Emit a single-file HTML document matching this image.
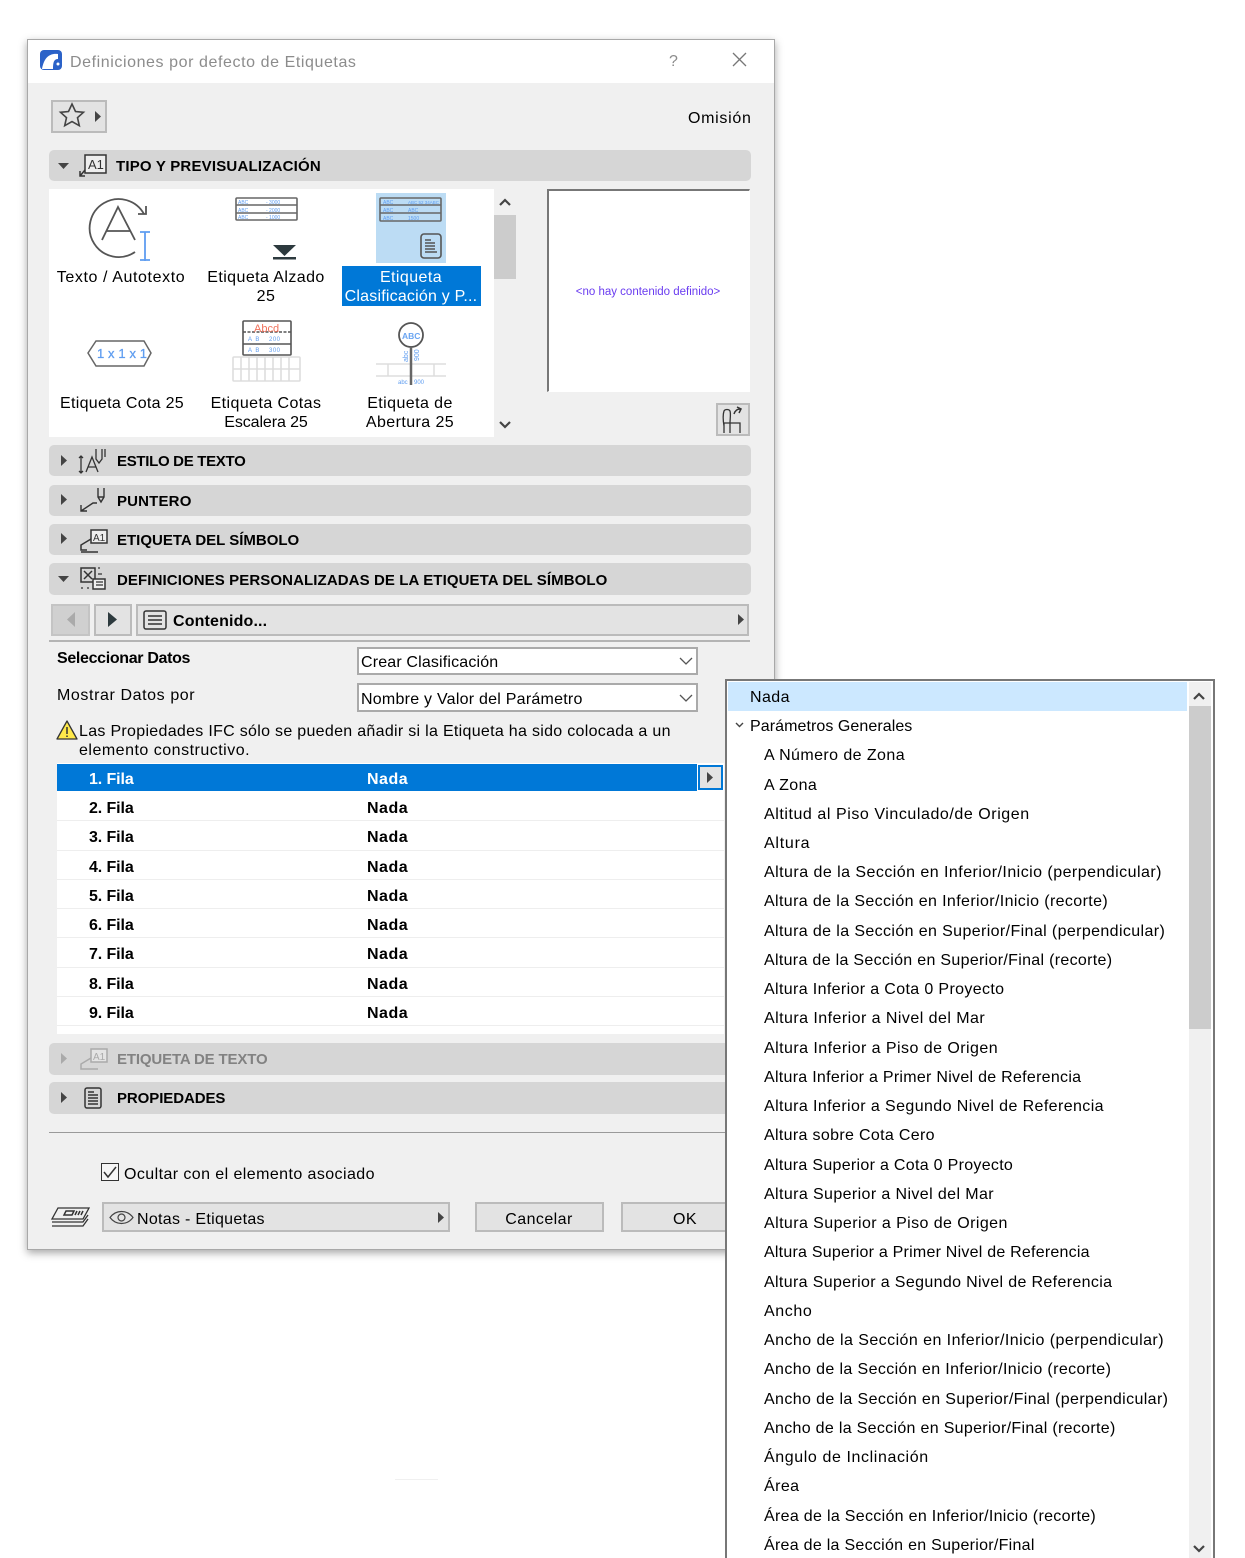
<!DOCTYPE html>
<html lang="es"><head><meta charset="utf-8"><title>Definiciones por defecto de Etiquetas</title>
<style>
html,body{margin:0;padding:0;background:#fff}
#p{position:relative;width:1245px;height:1558px;overflow:hidden;background:#fff;font-family:"Liberation Sans",sans-serif;font-size:16px;color:#000;letter-spacing:.42px}
#p div{position:absolute;box-sizing:border-box}
.t{white-space:nowrap;line-height:20px;height:20px;margin-top:2px}
.c{text-align:center;transform:translateX(-50%);margin-top:1px}
.b{font-weight:bold;letter-spacing:-.1px}
.h{font-size:15px}
.bar{left:49px;width:702px;background:#d6d6d6;border-radius:5px}
.btn{background:#e3e3e3;border:2px solid #bbb}
.dd{left:357px;width:341px;background:#fff;border:2px solid #aaa}
.sep{left:57px;width:667px;height:1px;background:#eee}
svg{position:absolute;left:0;top:0;letter-spacing:0}
</style></head><body><div id="p">
<div style="left:27px;top:39px;width:748px;height:1211px;background:#f0f0f0;border:1px solid #a8a8a8;box-shadow:0 3px 8px rgba(0,0,0,.35)"></div>
<div style="left:28px;top:40px;width:746px;height:43px;background:#fff"></div>
<div class="t" style="left:70px;top:51px;color:#8c8c8c;letter-spacing:.58px">Definiciones por defecto de Etiquetas</div>
<div class="t" style="left:669px;top:50px;color:#8c8c8c">?</div>
<div class="t" style="left:688px;top:107px;letter-spacing:.7px">Omisión</div>
<div class="btn" style="left:51px;top:100px;width:56px;height:33px"></div>
<div class="bar" style="top:150px;height:31px"></div>
<div class="t b h" style="left:116px;top:155px;letter-spacing:.2px">TIPO Y PREVISUALIZACIÓN</div>
<div style="left:49px;top:189px;width:445px;height:248px;background:#fff"></div>
<div style="left:376px;top:193px;width:70px;height:70px;background:#bcdcf4"></div>
<div style="left:342px;top:266px;width:139px;height:40px;background:#0078d7"></div>
<div style="left:494px;top:215px;width:22px;height:64px;background:#ccc"></div>
<div class="t c" style="left:121px;top:267px;letter-spacing:.6px">Texto / Autotexto</div>
<div class="t c" style="left:266px;top:267px">Etiqueta Alzado</div>
<div class="t c" style="left:266px;top:286px">25</div>
<div class="t c" style="left:411px;top:267px;color:#fff">Etiqueta</div>
<div class="t c" style="left:411px;top:286px;color:#fff;letter-spacing:.2px">Clasificación y P...</div>
<div class="t c" style="left:122px;top:393px;letter-spacing:.3px">Etiqueta Cota 25</div>
<div class="t c" style="left:266px;top:393px">Etiqueta Cotas</div>
<div class="t c" style="left:266px;top:412px;letter-spacing:-.1px">Escalera 25</div>
<div class="t c" style="left:410px;top:393px">Etiqueta de</div>
<div class="t c" style="left:410px;top:412px">Abertura 25</div>
<div style="left:547px;top:189px;width:203px;height:203px;background:#fff;border:1px solid #fff;border-top:2px solid #777;border-left:2px solid #777"></div>
<div class="t c" style="left:648px;top:281px;color:#6a3cf0;font-size:11.5px;letter-spacing:0">&lt;no hay contenido definido&gt;</div>
<div class="btn" style="left:716px;top:403px;width:34px;height:33px"></div>
<div class="bar" style="top:445px;height:31px"></div><div class="t b h" style="left:117px;top:450px;letter-spacing:-.31px">ESTILO DE TEXTO</div>
<div class="bar" style="top:485px;height:31px"></div><div class="t b h" style="left:117px;top:490px;letter-spacing:.17px">PUNTERO</div>
<div class="bar" style="top:524px;height:31px"></div><div class="t b h" style="left:117px;top:529px;letter-spacing:0">ETIQUETA DEL SÍMBOLO</div>
<div class="bar" style="top:563px;height:32px"></div><div class="t b h" style="left:117px;top:569px;letter-spacing:.1px">DEFINICIONES PERSONALIZADAS DE LA ETIQUETA DEL SÍMBOLO</div>
<div class="btn" style="left:51px;top:604px;width:39px;height:32px;background:#d0d0d0;border-color:#c4c4c4"></div>
<div class="btn" style="left:94px;top:604px;width:38px;height:32px"></div>
<div class="btn" style="left:136px;top:604px;width:613px;height:32px"></div>
<div class="t b" style="left:173px;top:610px;letter-spacing:.15px">Contenido...</div>
<div style="left:49px;top:640px;width:701px;height:2px;background:#b4b4b4"></div>
<div class="t b" style="left:57px;top:647px;letter-spacing:-.33px">Seleccionar Datos</div>
<div class="t" style="left:57px;top:684px;letter-spacing:.6px">Mostrar Datos por</div>
<div class="dd" style="top:647px;height:28px"></div><div class="t" style="left:361px;top:651px;letter-spacing:.16px">Crear Clasificación</div>
<div class="dd" style="top:683px;height:29px"></div><div class="t" style="left:361px;top:688px;letter-spacing:.24px">Nombre y Valor del Parámetro</div>
<div class="t" style="left:79px;top:720px;letter-spacing:.3px">Las Propiedades IFC sólo se pueden añadir si la Etiqueta ha sido colocada a un</div>
<div class="t" style="left:79px;top:739px;letter-spacing:.5px">elemento constructivo.</div>
<div style="left:57px;top:763px;width:667px;height:271px;background:#fff"></div>
<div style="left:57px;top:764px;width:640px;height:27px;background:#0078d7"></div>
<div style="left:698px;top:765px;width:25px;height:25px;background:#e3e3e3;border:2px solid #0078d7"></div>
<div class="sep" style="top:820px"></div><div class="sep" style="top:850px"></div><div class="sep" style="top:879px"></div><div class="sep" style="top:908px"></div><div class="sep" style="top:937px"></div><div class="sep" style="top:967px"></div><div class="sep" style="top:996px"></div><div class="sep" style="top:1025px"></div>
<div class="t b" style="left:89px;top:768px;color:#fff">1. Fila</div><div class="t b" style="left:367px;top:768px;color:#fff;letter-spacing:.5px">Nada</div>
<div class="t b" style="left:89px;top:797px">2. Fila</div><div class="t b" style="left:367px;top:797px;letter-spacing:.5px">Nada</div>
<div class="t b" style="left:89px;top:826px">3. Fila</div><div class="t b" style="left:367px;top:826px;letter-spacing:.5px">Nada</div>
<div class="t b" style="left:89px;top:856px">4. Fila</div><div class="t b" style="left:367px;top:856px;letter-spacing:.5px">Nada</div>
<div class="t b" style="left:89px;top:885px">5. Fila</div><div class="t b" style="left:367px;top:885px;letter-spacing:.5px">Nada</div>
<div class="t b" style="left:89px;top:914px">6. Fila</div><div class="t b" style="left:367px;top:914px;letter-spacing:.5px">Nada</div>
<div class="t b" style="left:89px;top:943px">7. Fila</div><div class="t b" style="left:367px;top:943px;letter-spacing:.5px">Nada</div>
<div class="t b" style="left:89px;top:973px">8. Fila</div><div class="t b" style="left:367px;top:973px;letter-spacing:.5px">Nada</div>
<div class="t b" style="left:89px;top:1002px">9. Fila</div><div class="t b" style="left:367px;top:1002px;letter-spacing:.5px">Nada</div>
<div class="bar" style="top:1043px;height:32px"></div><div class="t b h" style="left:117px;top:1048px;color:#828282;letter-spacing:-.15px">ETIQUETA DE TEXTO</div>
<div class="bar" style="top:1082px;height:32px"></div><div class="t b h" style="left:117px;top:1087px;letter-spacing:-.08px">PROPIEDADES</div>
<div style="left:49px;top:1132px;width:701px;height:1px;background:#9a9a9a"></div>
<div style="left:101px;top:1163px;width:18px;height:18px;background:#f6f6f6;border:1px solid #333"></div>
<div class="t" style="left:124px;top:1163px">Ocultar con el elemento asociado</div>
<div class="btn" style="left:102px;top:1202px;width:348px;height:30px"></div>
<div class="t" style="left:137px;top:1208px;letter-spacing:.3px">Notas - Etiquetas</div>
<div class="btn" style="left:475px;top:1202px;width:129px;height:30px"></div><div class="t c" style="left:539px;top:1209px">Cancelar</div>
<div class="btn" style="left:621px;top:1202px;width:130px;height:30px"></div><div class="t c" style="left:685px;top:1209px">OK</div>
<div style="left:395px;top:1479px;width:43px;height:1px;background:#f0f0f0"></div>

<svg width="1245" height="1558" viewBox="0 0 1245 1558" fill="none" stroke="#444" stroke-width="1.5" font-family="Liberation Sans,sans-serif">
<!-- app icon -->
<rect x="40" y="50" width="22" height="20" rx="4" fill="#2b62c8" stroke="none"/><path d="M42 69C44 58 49 53 58 54v5c-4 0-5 3-5 10z" fill="#fff" stroke="none"/><circle cx="58" cy="64" r="1.5" fill="#fff" stroke="none"/>
<path d="M733 53l13 13M746 53l-13 13" stroke="#777" stroke-width="1.3"/>
<!-- star -->
<path d="M72 104l3.500 7.500 8 .8-6 5.400 1.800 8-7.300-4.200-7.300 4.200 1.800-8-6-5.400 8-.8z" stroke="#444" stroke-width="1.6"/><path d="M95 111l6 5.500-6 5.500z" fill="#444" stroke="none"/>
<!-- section triangles -->
<path d="M58 163h11l-5.500 6z" fill="#444" stroke="none"/>
<path d="M58 576h11l-5.500 6z" fill="#444" stroke="none"/>
<path d="M61 455l6 5.500-6 5.500z" fill="#444" stroke="none"/><path d="M61 494l6 5.500-6 5.500z" fill="#444" stroke="none"/><path d="M61 533l6 5.500-6 5.500z" fill="#444" stroke="none"/><path d="M61 1053l6 5.500-6 5.500z" fill="#aaa" stroke="none"/><path d="M61 1092l6 5.500-6 5.500z" fill="#444" stroke="none"/>
<!-- section: A1 -->
<rect x="85" y="155" width="21" height="18" fill="#eee" stroke="#333"/><text x="88" y="169" font-size="13" fill="#333" stroke="none">A1</text><path d="M85 170l-5 6m0-5v5h5" stroke="#333"/>
<!-- estilo de texto -->
<path d="M81 456v17m-2-15l2-2 2 2m-4 13l2 2 2-2M86 472l6-15 6 15m-10-5h8M96 449v10l3 4 3-4v-10M105 449v8" stroke="#333" stroke-width="1.3"/>
<!-- puntero -->
<path d="M81 511l0-6v6h6M81 511l12-8h4M98 488v9l3 5 3-5v-9" stroke="#333" stroke-width="1.4"/><path d="M98 497h6" stroke="#333"/>
<!-- etiqueta simbolo -->
<rect x="91" y="530" width="16" height="13" fill="#eee" stroke="#333"/><text x="93" y="541" font-size="10" fill="#333" stroke="none">A1</text><path d="M91 539l-10 6v5h6M81 552h17" stroke="#333" stroke-width="1.5"/>
<!-- definiciones -->
<rect x="81" y="568" width="14" height="14" stroke="#333"/><path d="M84 571l8 8m0-8l-8 8" stroke="#333"/><rect x="93" y="579" width="12" height="10" fill="#eee" stroke="#333"/><path d="M96 582h7M96 585h7M81 588h2M87 588h2M98 568h2M98 574h4" stroke="#333" stroke-width="1.200"/>
<!-- etiqueta texto gris -->
<rect x="91" y="1049" width="16" height="13" fill="#e4e4e4" stroke="#aaa"/><text x="93" y="1060" font-size="10" fill="#aaa" stroke="none">A1</text><path d="M91 1058l-10 6v5h6M81 1069h17" stroke="#aaa" stroke-width="1.5"/>
<!-- propiedades -->
<rect x="85" y="1088" width="16" height="20" rx="2" stroke="#333"/><path d="M88 1092h6M88 1095h10M88 1098h10M88 1101h10M88 1104h10" stroke="#333"/>
<!-- Texto icon -->
<path d="M144 214A29 29 0 1 0 135 252" stroke="#555" stroke-width="1.800"/><path d="M146 206v8h-8" stroke="#555" stroke-width="1.800"/>
<path d="M102 240l16-33 17 33M106 231h24" stroke="#555" stroke-width="1.800"/>
<path d="M145 232v29M140 232h10M140 260h10" stroke="#5f9df0" stroke-width="1.800"/>
<!-- Alzado icon -->
<rect x="236" y="198" width="61" height="22" rx="1" stroke="#666" stroke-width="1.600"/><path d="M236 205h61M236 213h61" stroke="#666" stroke-width="1.600"/>
<text x="238" y="204" font-size="5" fill="#5f9df0" stroke="none">ABC</text><text x="238" y="212" font-size="5" fill="#5f9df0" stroke="none">ABC</text><text x="238" y="219" font-size="5" fill="#5f9df0" stroke="none">ABC</text>
<text x="266" y="204" font-size="5" fill="#5f9df0" stroke="none">- 3000</text><text x="266" y="212" font-size="5" fill="#5f9df0" stroke="none">- 2000</text><text x="266" y="219" font-size="5" fill="#5f9df0" stroke="none">- 1000</text>
<path d="M273 245h23l-11.500 11z" fill="#2d3a3e" stroke="none"/><rect x="273" y="257" width="23" height="2.500" fill="#2d3a3e" stroke="none"/>
<!-- Selected icon -->
<rect x="380" y="198" width="61" height="23" rx="1" stroke="#666" stroke-width="1.600"/><path d="M380 205h61M380 213h61" stroke="#666" stroke-width="1.600"/>
<text x="383" y="204" font-size="5" fill="#5f9df0" stroke="none">ABC</text><text x="383" y="212" font-size="5" fill="#5f9df0" stroke="none">ABC</text><text x="383" y="220" font-size="5" fill="#5f9df0" stroke="none">ABC</text>
<text x="408" y="204" font-size="4.500" fill="#5f9df0" stroke="none">ABC 52 34ABC</text><text x="408" y="212" font-size="5" fill="#5f9df0" stroke="none">ABC</text><text x="408" y="220" font-size="5" fill="#5f9df0" stroke="none">1500</text>
<rect x="421" y="234" width="20" height="24" rx="3" stroke="#555" stroke-width="1.600"/><path d="M425 240h6M425 243h10M425 246h10M425 249h10M425 252h12" stroke="#555"/>
<!-- Cota icon -->
<path d="M96 341h48l7 12-7 13H96l-8-13z" stroke="#666" stroke-width="1.500"/>
<text x="97" y="358" font-size="13" fill="#5f9df0" stroke="#5f9df0" stroke-width=".3" textLength="50">1 x 1 x 1</text>
<!-- Escalera icon -->
<g stroke="#ddd" stroke-width="1.600"><rect x="233" y="357" width="67" height="24" rx="1"/><path d="M233 369h67M241 357v24M249 357v24M257 357v24M265 357v24M273 357v24M281 357v24M289 357v24"/></g>
<rect x="243" y="321" width="48" height="34" rx="1" fill="#fff" stroke="#555" stroke-width="1.600"/><path d="M243 332h48" stroke="#555" stroke-dasharray="3 1.500"/><path d="M243 344h48" stroke="#555"/>
<text x="254" y="332" font-size="11" fill="#f0705a" stroke="none">Abcd</text>
<text x="248" y="341" font-size="6" fill="#5f9df0" stroke="none" letter-spacing="1">A B</text><text x="269" y="341" font-size="6" fill="#5f9df0" stroke="none" letter-spacing=".5">200</text>
<text x="248" y="352" font-size="6" fill="#5f9df0" stroke="none" letter-spacing="1">A B</text><text x="269" y="352" font-size="6" fill="#5f9df0" stroke="none" letter-spacing=".5">300</text>
<!-- Abertura icon -->
<path d="M376 364h70M376 376h70M388 364v12M434 364v12" stroke="#ddd" stroke-width="1.500"/>
<circle cx="411" cy="335" r="12" stroke="#555" stroke-width="1.800"/><path d="M411 347v38" stroke="#666" stroke-width="2.500"/>
<text x="402" y="339" font-size="8.500" font-weight="bold" fill="#6aa5f2" stroke="none">ABC</text>
<text x="0" y="0" font-size="7" fill="#5f9df0" stroke="none" transform="translate(408 362) rotate(-90)">abc</text><text x="0" y="0" font-size="7" fill="#5f9df0" stroke="none" transform="translate(419 361) rotate(-90)">900</text>
<text x="398" y="384" font-size="6" fill="#5f9df0" stroke="none">abc</text><text x="414" y="384" font-size="6" fill="#5f9df0" stroke="none">900</text>
<!-- list scroll arrows -->
<path d="M500 205l5-5 5 5" stroke="#444" stroke-width="2.200"/><path d="M500 422l5 5 5-5" stroke="#444" stroke-width="2.200"/>
<!-- chair -->
<path d="M724 426c-1-6-1-12 0-15 1-2 5-2 6 0 1 3 0 8 0 12h10v10M724 433v-10M730 423v10M724 423h6" stroke="#333" stroke-width="1.300"/><path d="M734 414c1-3 3-5 6-5m-3-2l4 2-2 4" stroke="#333" stroke-width="1.500"/>
<!-- nav -->
<path d="M75 612v15l-8-7.500z" fill="#aaa" stroke="none"/><path d="M108 612v15l9-7.500z" fill="#2d3a3e" stroke="none"/>
<rect x="144" y="611" width="22" height="18" rx="2" stroke="#333" stroke-width="1.500"/><path d="M148 616h14M148 620h14M148 624h14" stroke="#333"/>
<path d="M738 614l6 5.500-6 5.500z" fill="#444" stroke="none"/>
<!-- dropdown chevrons -->
<path d="M680 658l6 6 6-6" stroke="#555" stroke-width="1.300"/><path d="M680 695l6 6 6-6" stroke="#555" stroke-width="1.300"/>
<!-- warning -->
<path d="M67 721l10 18H57z" fill="#ffe94a" stroke="#333" stroke-width="1.300" stroke-linejoin="round"/><path d="M67 727v7M67 735.500v1.500" stroke="#333" stroke-width="1.500"/>
<!-- row arrow -->
<path d="M707 772l6 5.500-6 5.500z" fill="#444" stroke="none"/>
<!-- checkbox -->
<path d="M104 1172l4 5 8-10" stroke="#333" stroke-width="1.500"/>
<!-- layers -->
<path d="M58 1208h31l-6 11H52zM52 1222h31l5-7M52 1226h31l5-7" stroke="#333" stroke-width="1.300"/><path d="M66 1211h8l-2 4h-8zM77 1211l-2 4M80 1211l-2 4M83 1211l-2 4" stroke="#333"/>
<!-- eye -->
<path d="M110 1217.500c6-8 17-8 23 0-6 8-17 8-23 0z" stroke="#444" stroke-width="1.200"/><circle cx="121.500" cy="1217.500" r="3.500" stroke="#444" stroke-width="1.200"/>
<path d="M438 1212l6 5.500-6 5.500z" fill="#444" stroke="none"/>
</svg>

<!-- popup -->
<div style="left:725px;top:679px;width:490px;height:879px;background:#fff;border:2px solid #777;border-bottom:0"></div>
<div style="left:728px;top:682px;width:459px;height:29px;background:#cce8ff"></div>
<div style="left:1189px;top:682px;width:22px;height:876px;background:#f0f0f0"></div>
<div style="left:1189px;top:706px;width:22px;height:323px;background:#ccc"></div>
<svg width="1245" height="1558" viewBox="0 0 1245 1558" fill="none" stroke="#444" stroke-width="2.200">
<path d="M1194 699l5-5 5 5"/><path d="M1194 1546l5 5 5-5"/><path d="M736 723l3.500 3.500 3.500-3.500" stroke-width="1.400"/>
</svg>
<div class="t" style="left:750px;top:686px">Nada</div>
<div class="t" style="left:750px;top:715px;letter-spacing:.07px">Parámetros Generales</div>
<div class="t" style="left:764px;top:744px">A Número de Zona</div>
<div class="t" style="left:764px;top:774px">A Zona</div>
<div class="t" style="left:764px;top:803px;letter-spacing:.56px">Altitud al Piso Vinculado/de Origen</div>
<div class="t" style="left:764px;top:832px;letter-spacing:.75px">Altura</div>
<div class="t" style="left:764px;top:861px;letter-spacing:.46px">Altura de la Sección en Inferior/Inicio (perpendicular)</div>
<div class="t" style="left:764px;top:890px;letter-spacing:.38px">Altura de la Sección en Inferior/Inicio (recorte)</div>
<div class="t" style="left:764px;top:920px;letter-spacing:.38px">Altura de la Sección en Superior/Final (perpendicular)</div>
<div class="t" style="left:764px;top:949px;letter-spacing:.31px">Altura de la Sección en Superior/Final (recorte)</div>
<div class="t" style="left:764px;top:978px;letter-spacing:.36px">Altura Inferior a Cota 0 Proyecto</div>
<div class="t" style="left:764px;top:1007px;letter-spacing:.45px">Altura Inferior a Nivel del Mar</div>
<div class="t" style="left:764px;top:1037px;letter-spacing:.45px">Altura Inferior a Piso de Origen</div>
<div class="t" style="left:764px;top:1066px;letter-spacing:.28px">Altura Inferior a Primer Nivel de Referencia</div>
<div class="t" style="left:764px;top:1095px;letter-spacing:.4px">Altura Inferior a Segundo Nivel de Referencia</div>
<div class="t" style="left:764px;top:1124px;letter-spacing:.33px">Altura sobre Cota Cero</div>
<div class="t" style="left:764px;top:1154px;letter-spacing:.3px">Altura Superior a Cota 0 Proyecto</div>
<div class="t" style="left:764px;top:1183px;letter-spacing:.39px">Altura Superior a Nivel del Mar</div>
<div class="t" style="left:764px;top:1212px">Altura Superior a Piso de Origen</div>
<div class="t" style="left:764px;top:1241px;letter-spacing:.23px">Altura Superior a Primer Nivel de Referencia</div>
<div class="t" style="left:764px;top:1271px;letter-spacing:.35px">Altura Superior a Segundo Nivel de Referencia</div>
<div class="t" style="left:764px;top:1300px;letter-spacing:.6px">Ancho</div>
<div class="t" style="left:764px;top:1329px;letter-spacing:.44px">Ancho de la Sección en Inferior/Inicio (perpendicular)</div>
<div class="t" style="left:764px;top:1358px;letter-spacing:.38px">Ancho de la Sección en Inferior/Inicio (recorte)</div>
<div class="t" style="left:764px;top:1388px;letter-spacing:.38px">Ancho de la Sección en Superior/Final (perpendicular)</div>
<div class="t" style="left:764px;top:1417px;letter-spacing:.31px">Ancho de la Sección en Superior/Final (recorte)</div>
<div class="t" style="left:764px;top:1446px;letter-spacing:.6px">Ángulo de Inclinación</div>
<div class="t" style="left:764px;top:1475px">Área</div>
<div class="t" style="left:764px;top:1505px;letter-spacing:.31px">Área de la Sección en Inferior/Inicio (recorte)</div>
<div class="t" style="left:764px;top:1534px;letter-spacing:.28px">Área de la Sección en Superior/Final</div>
</div></body></html>
